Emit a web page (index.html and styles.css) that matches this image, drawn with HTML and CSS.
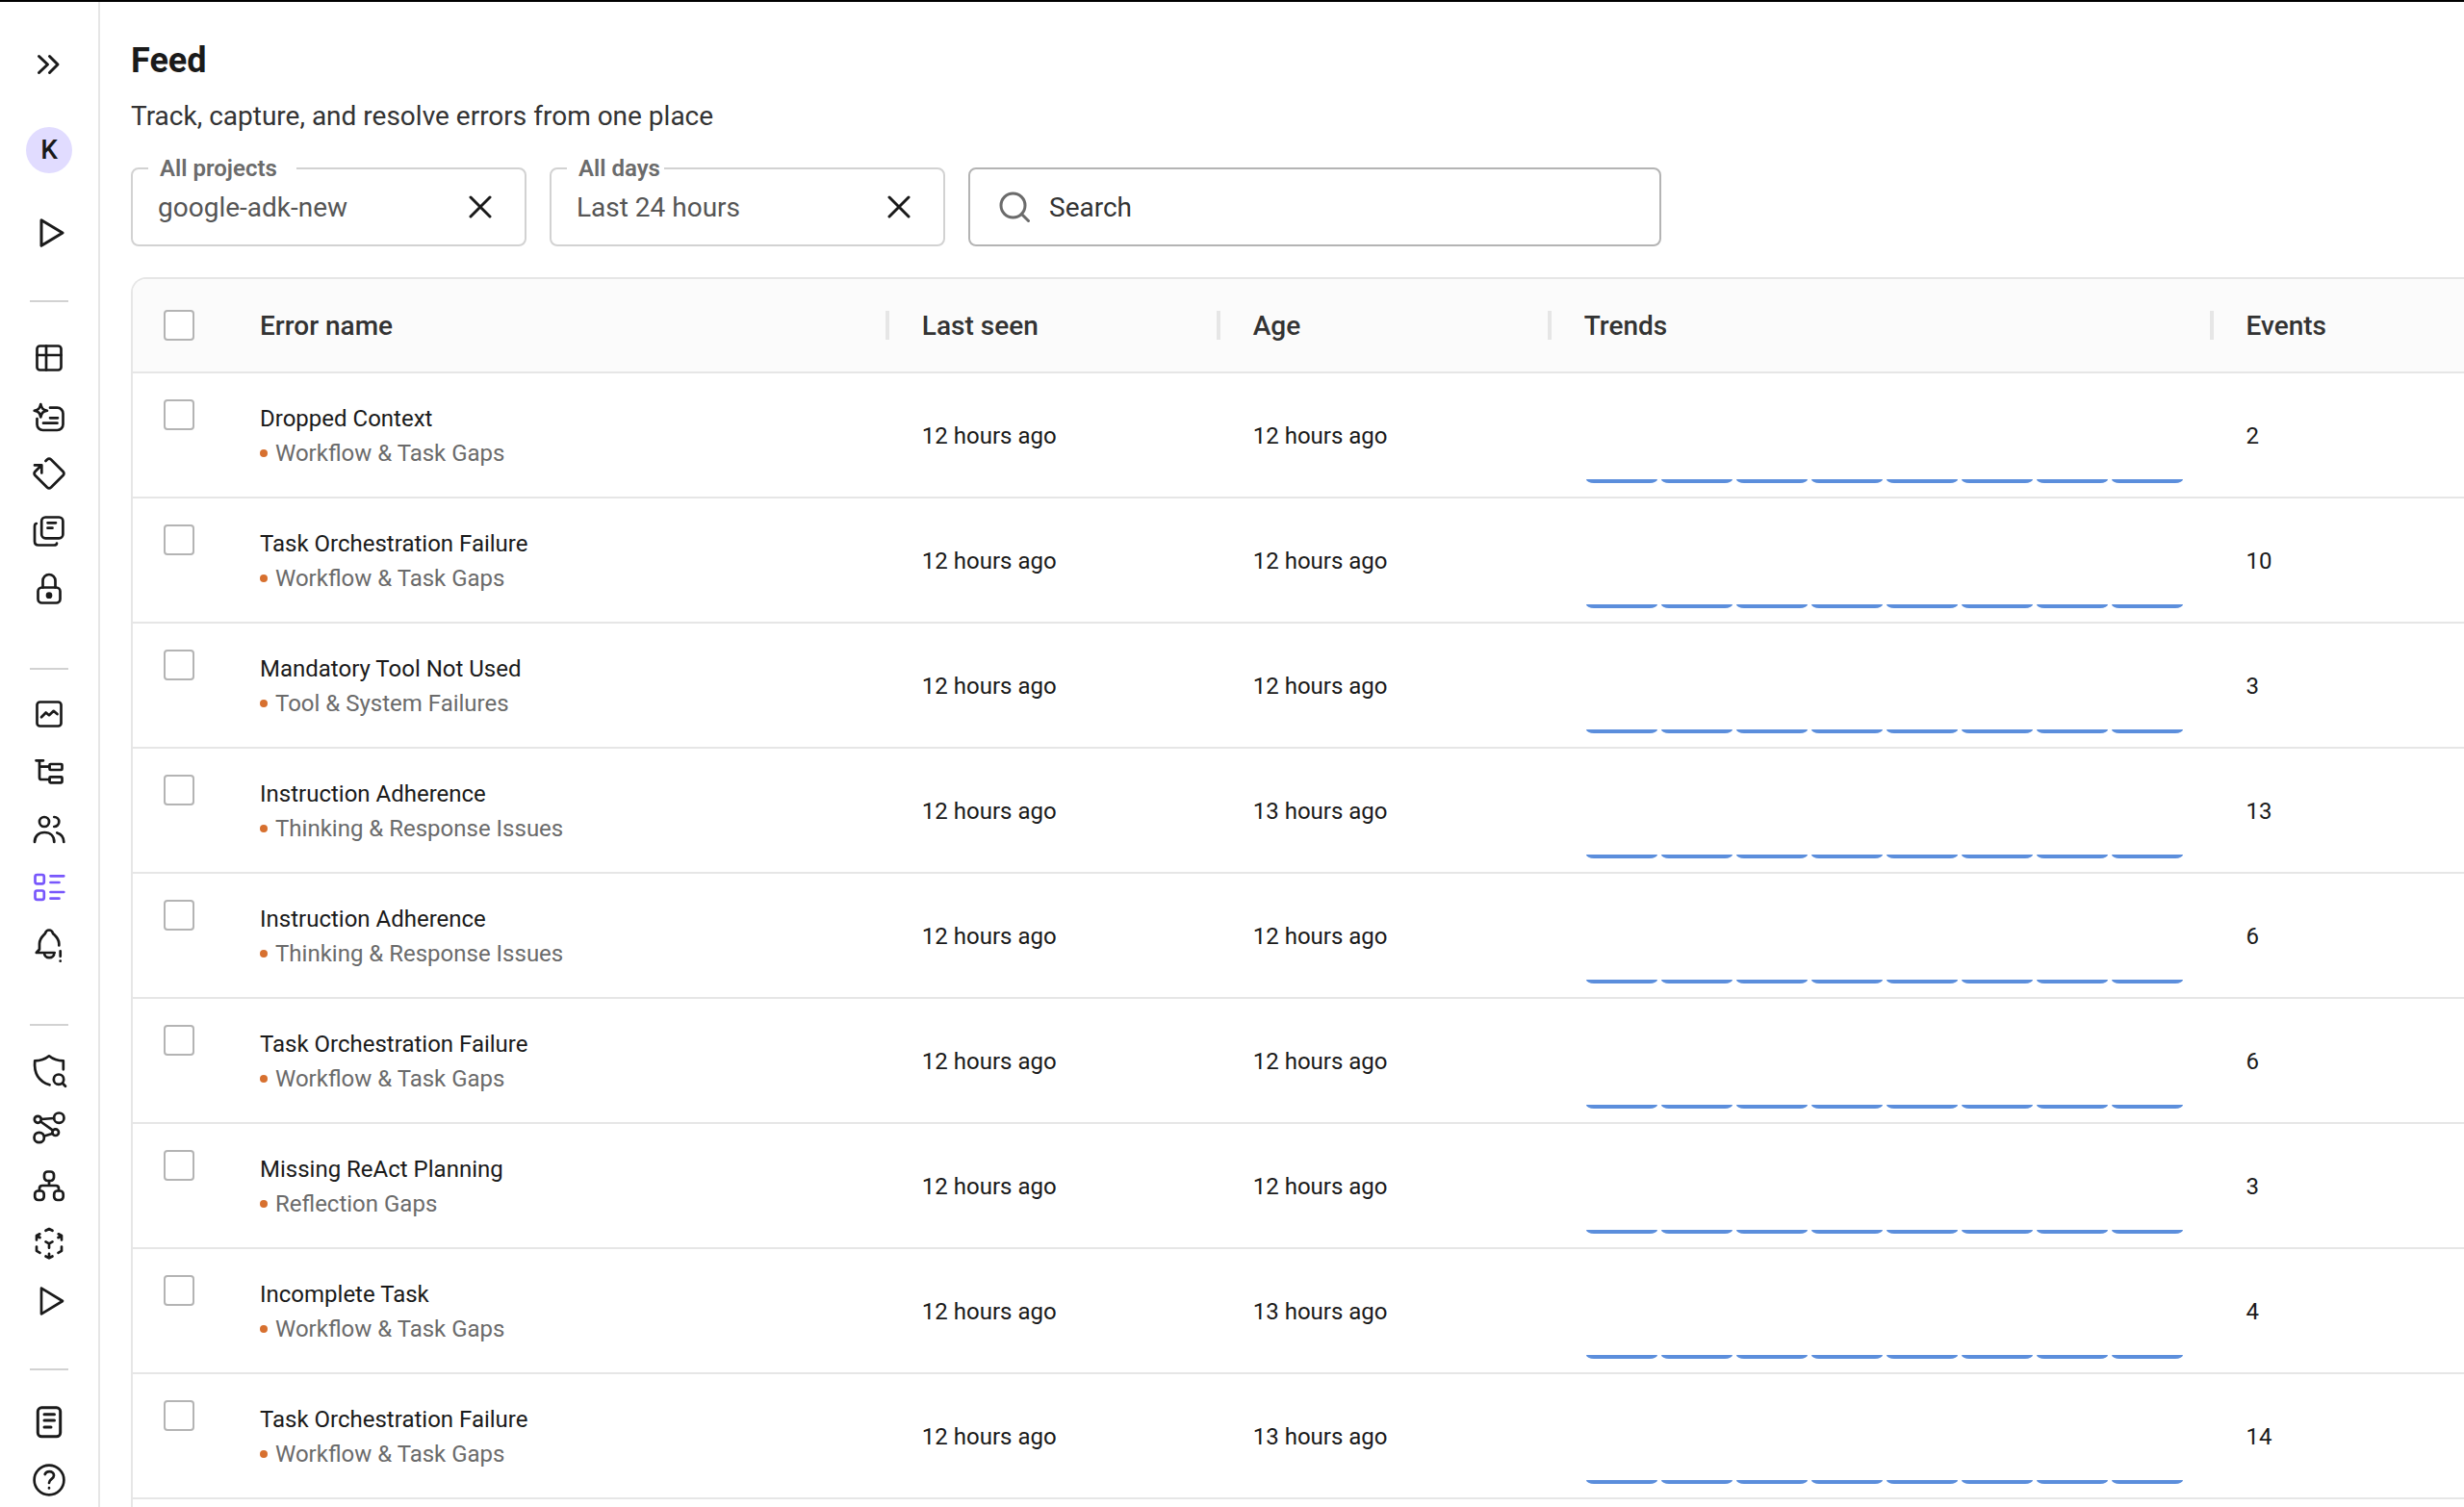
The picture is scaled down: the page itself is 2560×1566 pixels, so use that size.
FILE: index.html
```
<!DOCTYPE html>
<html lang="en">
<head>
  <meta charset="UTF-8">
  <title>Feed</title>
  <link rel="stylesheet" href="styles.css">
</head>
<body>
  <aside class="sidebar">
    <button class="nav-item" aria-label="Expand menu">
      <svg class="icon bold" viewBox="0 0 48 48"><path d="M13.5 15.5l9 8.5-9 8.5M24.5 15.5l8.500 8.500-8.500 8.500"/></svg>
    </button>
    <button class="avatar">K</button>
    <nav class="nav">
      <a class="nav-item" href="#" aria-label="Get started">
        <svg class="icon bold" viewBox="0 0 48 48"><path d="M16 10.700L38 24 16 37.300z"/></svg>
      </a>
      <hr>
      <a class="nav-item" href="#" aria-label="Datasets">
        <svg class="icon" viewBox="0 0 48 48"><rect x="11.500" y="11.500" width="25" height="25" rx="3"/><path d="M21 11.500v25M11.500 21h25"/></svg>
      </a>
      <a class="nav-item" href="#" aria-label="Prompts">
        <svg class="icon" viewBox="0 0 48 48"><path d="M25 15.700h7.500a6 6 0 0 1 6 6V33a6 6 0 0 1-6 6h-15a6 6 0 0 1-6-6v-6M25 26.300h8M18 31.700h14.500M15.300 12c1 4.500 2 5.700 6.700 6.700-4.700 1-5.700 2.200-6.700 6.700-1-4.500-2-5.700-6.600-6.700 4.600-1 5.600-2.200 6.600-6.700z"/></svg>
      </a>
      <a class="nav-item" href="#" aria-label="Annotations">
        <svg class="icon" viewBox="0 0 48 48"><path d="M20.500 11l1.500-1.500a3 3 0 0 1 4 0L38.500 22a3 3 0 0 1 0 4L26 38.500a3 3 0 0 1-4 0L9.500 26a3 3 0 0 1 0-4l6.500-6.500M9 15.400h7.300v8.100"/></svg>
      </a>
      <a class="nav-item" href="#" aria-label="Library">
        <svg class="icon" viewBox="0 0 48 48"><rect x="16.200" y="9.500" width="22.200" height="21.800" rx="4"/><path d="M22.500 15.300h8.500M22.500 20.700h5M10.800 16c-1.500.3-1.800 1.500-1.800 3v15.500q0 4 4 4H29q3 0 3-2"/></svg>
      </a>
      <a class="nav-item" href="#" aria-label="Keys">
        <svg class="icon" viewBox="0 0 48 48"><rect x="12.500" y="22.500" width="23" height="16" rx="4"/><path d="M17.500 22.500V15.500a6.500 6.500 0 0 1 13 0v7"/><circle class="fill" cx="24" cy="30.700" r="2"/></svg>
      </a>
      <hr class="roomy">
      <a class="nav-item" href="#" aria-label="Dashboard">
        <svg class="icon" viewBox="0 0 48 48"><rect x="11.500" y="11.500" width="25" height="25" rx="3"/><path d="M16 27.300l4.700-4.800 3.300 2.700 4.700-4.400 3.800 3.300"/></svg>
      </a>
      <a class="nav-item" href="#" aria-label="Traces">
        <svg class="icon" viewBox="0 0 48 48"><path d="M10.500 12.300h7.500M14 12.300V30q0 2 2 2h8.500M14 18.700h10.500"/><rect x="24.500" y="16" width="13" height="6" rx="1"/><rect x="24.500" y="29.300" width="13" height="6" rx="1"/></svg>
      </a>
      <a class="nav-item" href="#" aria-label="Users">
        <svg class="icon" viewBox="0 0 48 48"><circle cx="19" cy="16" r="5"/><path d="M29.300 11a5 5 0 0 1 0 10M9 37c0-6 4-10 10.200-10s10.100 4 10.100 10M32.300 27.500c4.200 1.300 6.900 4.700 7 9.500"/></svg>
      </a>
      <a class="nav-item active" href="#" aria-label="Feed">
        <svg class="icon" viewBox="0 0 48 48"><rect x="9.500" y="11" width="9.300" height="9.300" rx="2"/><rect x="9.500" y="27.500" width="9.300" height="9.300" rx="2"/><path d="M25.500 12.300h13.800M25.500 19h9M25.500 29h13.800M25.500 35.700h9"/></svg>
      </a>
      <a class="nav-item" href="#" aria-label="Alerts">
        <svg class="icon" viewBox="0 0 48 48"><path d="M34.300 24.500v-2c0-5-3.300-7.500-6.300-10.500-.5-2-2-3.500-4-3.500s-3.500 1.500-4 3.500c-3 3-6 5.500-6 10.500v6L10.800 32h18.900M19 32a5.200 5.200 0 0 0 10.400 0M35.700 30.300v5.500M35.700 40.500v.2"/></svg>
      </a>
      <hr class="roomy">
      <a class="nav-item" href="#" aria-label="Guardrails">
        <svg class="icon" viewBox="0 0 48 48"><path d="M24.500 39.300C14 36 8 28 9.200 14.300c6 0 10-1 14.800-5 4.800 4 8.800 5 14.800 5v9"/><circle cx="34" cy="33.700" r="5.200"/><path d="M37.800 37.500l3.200 3.200"/></svg>
      </a>
      <a class="nav-item" href="#" aria-label="Workflows">
        <svg class="icon" viewBox="0 0 48 48"><circle cx="12.300" cy="15.300" r="3.500"/><circle cx="34.300" cy="13.700" r="5.200"/><circle cx="30.700" cy="28.700" r="3.300"/><circle cx="13.700" cy="34" r="5.200"/><path d="M16 15l13-1M15.200 17.500l12.800 9.200M19 32.500l8.300-2.500"/></svg>
      </a>
      <a class="nav-item" href="#" aria-label="Agents">
        <svg class="icon" viewBox="0 0 48 48"><rect x="19" y="9.500" width="10" height="9.500" rx="3.500"/><rect x="9.200" y="29.500" width="9.500" height="9.500" rx="3.500"/><rect x="29.200" y="29.500" width="9.500" height="9.500" rx="3.500"/><path d="M24 19v5M14 29v-2q0-3 3-3h14q3 0 3 3v2"/></svg>
      </a>
      <a class="nav-item" href="#" aria-label="Models">
        <svg class="icon" viewBox="0 0 48 48"><path d="M20.500 10.800L24 9l3.500 1.800M11 20.500V16l3.500 2M11 16l3.300-1.700M37 20.500V16l-3.500 2M37 16l-3.300-1.700M20.500 22.300l3.500 2 3.500-2M24 24.300v4.400M11 27.500v4.300l3.500 2M37 27.500v4.300l-3.500 2M24 34.800V39M20.500 37.500L24 39.300l3.500-1.800"/></svg>
      </a>
      <a class="nav-item" href="#" aria-label="Playground">
        <svg class="icon" viewBox="0 0 48 48"><path d="M16 10.700L38 24 16 37.300z"/></svg>
      </a>
      <hr class="last">
      <a class="nav-item" href="#" aria-label="Docs">
        <svg class="icon bold" viewBox="0 0 48 48"><rect x="12.300" y="8.800" width="23.400" height="30" rx="4"/><path d="M19 15.700h10.500M19 22h10.500M19 29h7"/></svg>
      </a>
      <a class="nav-item" href="#" aria-label="Help">
        <svg class="icon" viewBox="0 0 48 48"><circle cx="24" cy="24" r="15.400"/><path d="M19.700 18c.6-1.800 2.400-2.900 4.600-2.900 2.700 0 4.700 1.700 4.700 4.200 0 3.500-5 3.700-5 7.700M24 32.200v.3"/></svg>
      </a>
    </nav>
  </aside>

  <main class="main">
    <h1>Feed</h1>
    <p class="subtitle">Track, capture, and resolve errors from one place</p>

    <div class="filters">
      <div class="field">
        <label class="wide" for="project">All projects</label>
        <select id="project"><option>google-adk-new</option></select>
        <button class="clear" aria-label="Clear project">
          <svg viewBox="0 0 24 24"><path d="M2 2l20 20M22 2L2 22"/></svg>
        </button>
      </div>
      <div class="field">
        <label for="days">All days</label>
        <select id="days"><option>Last 24 hours</option></select>
        <button class="clear" aria-label="Clear days">
          <svg viewBox="0 0 24 24"><path d="M2 2l20 20M22 2L2 22"/></svg>
        </button>
      </div>
      <div class="field search">
        <svg viewBox="0 0 32 32"><circle cx="14.500" cy="14.500" r="12.500"/><path d="M23.500 23.500l7 7"/></svg>
        <input type="text" placeholder="Search" aria-label="Search">
      </div>
    </div>

    <div class="table-wrap">
      <table>
        <colgroup>
          <col class="col-check">
          <col class="col-wide">
          <col class="col-time">
          <col class="col-time">
          <col class="col-wide">
          <col>
        </colgroup>
        <thead>
          <tr>
            <th class="check"><input type="checkbox" aria-label="Select all"></th>
            <th>Error name</th>
            <th class="sep">Last seen</th>
            <th class="sep">Age</th>
            <th class="sep">Trends</th>
            <th class="sep">Events</th>
          </tr>
        </thead>
        <tbody id="rows"></tbody>
      </table>
    </div>
  </main>

  <script>
    const errors = [
      ["Dropped Context", "Workflow & Task Gaps", "12 hours ago", "12 hours ago", 2],
      ["Task Orchestration Failure", "Workflow & Task Gaps", "12 hours ago", "12 hours ago", 10],
      ["Mandatory Tool Not Used", "Tool & System Failures", "12 hours ago", "12 hours ago", 3],
      ["Instruction Adherence", "Thinking & Response Issues", "12 hours ago", "13 hours ago", 13],
      ["Instruction Adherence", "Thinking & Response Issues", "12 hours ago", "12 hours ago", 6],
      ["Task Orchestration Failure", "Workflow & Task Gaps", "12 hours ago", "12 hours ago", 6],
      ["Missing ReAct Planning", "Reflection Gaps", "12 hours ago", "12 hours ago", 3],
      ["Incomplete Task", "Workflow & Task Gaps", "12 hours ago", "13 hours ago", 4],
      ["Task Orchestration Failure", "Workflow & Task Gaps", "12 hours ago", "13 hours ago", 14]
    ];

    const bars = "<span></span>".repeat(8);

    document.getElementById("rows").innerHTML = errors.map(([name, group, seen, age, events]) => `
      <tr>
        <td class="check"><input type="checkbox" aria-label="Select ${name}"></td>
        <td>
          <div>${name}</div>
          <div class="group">${group.replace("&", "&amp;")}</div>
        </td>
        <td>${seen}</td>
        <td>${age}</td>
        <td class="trend"><div class="bars">${bars}</div></td>
        <td>${events}</td>
      </tr>
    `).join("");
  </script>
</body>
</html>
```
FILE: styles.css
```
* {
  box-sizing: border-box;
}

body {
  margin: 0;
  display: flex;
  height: 100vh;
  overflow: hidden;
  border-top: 2px solid #000;
  background: #fff;
  color: #1a1a1a;
  font-family: Roboto, "Noto Sans", sans-serif;
  font-size: 24px;
  line-height: 36px;
}

button,
input,
select {
  font: inherit;
  color: inherit;
}

button {
  padding: 0;
  border: none;
  background: none;
  cursor: pointer;
}

svg {
  display: block;
  fill: none;
  stroke: currentColor;
  stroke-linecap: round;
  stroke-linejoin: round;
}

/* Sidebar */

.sidebar {
  flex: none;
  display: flex;
  flex-direction: column;
  align-items: center;
  width: 104px;
  padding-top: 35px;
  border-right: 2px solid #e6e6e6;
}

.nav {
  margin-top: 32px;
}

.nav-item {
  flex: none;
  display: flex;
  align-items: center;
  justify-content: center;
  width: 60px;
  height: 60px;
  color: #1a1a1a;
}

.nav-item.active {
  color: #7857fc;
}

.icon {
  width: 48px;
  height: 48px;
  stroke-width: 2.7;
}

.icon.bold {
  stroke-width: 3;
}

.icon .fill {
  fill: currentColor;
}

.avatar {
  flex: none;
  width: 48px;
  height: 48px;
  margin-top: 35px;
  border-radius: 50%;
  background: #e1dcff;
  font-size: 28px;
  font-weight: 500;
}

.nav hr {
  width: 40px;
  height: 2px;
  margin: 40px auto 28px;
  border: none;
  background: #d2d2d2;
}

.nav hr.roomy {
  margin: 52px auto 16px;
}

.nav hr.last {
  margin-bottom: 24px;
}

/* Page */

.main {
  flex: 1;
  min-width: 0;
  display: flex;
  flex-direction: column;
  padding: 37px 0 0 32px;
}

h1 {
  margin: 0;
  font-size: 36px;
  font-weight: 700;
  line-height: 48px;
}

.subtitle {
  margin: 16px 0 35px;
  color: #333;
  font-size: 28px;
}

.filters {
  display: flex;
  gap: 24px;
  margin-bottom: 32px;
}

.field {
  position: relative;
  display: flex;
  align-items: center;
  width: 411px;
  height: 82px;
  padding: 0 34px 0 26px;
  border: 2px solid #d2d2d2;
  border-radius: 8px;
  color: #555;
  font-size: 28px;
}

.field label {
  position: absolute;
  top: -19px;
  left: 16px;
  padding: 0 4px 0 12px;
  background: #fff;
  color: #6b6b6b;
  font-size: 24px;
  font-weight: 600;
}

.field label.wide {
  padding-right: 20px;
}

.field select {
  flex: 1;
  min-width: 0;
  padding: 2px 0 0;
  border: none;
  background: none;
  appearance: none;
}

.clear svg {
  width: 24px;
  height: 24px;
  color: #1a1a1a;
  stroke-width: 3;
}

.field.search {
  width: 720px;
  gap: 20px;
  padding-left: 30px;
  border-color: #b4b4b4;
}

.search svg {
  width: 32px;
  height: 32px;
  color: #6b6b6b;
  stroke-width: 3;
}

.search input {
  flex: 1;
  min-width: 0;
  padding: 2px 0 0;
  border: none;
  outline: none;
  background: none;
}

.search input::placeholder {
  color: #333;
  opacity: 1;
}

/* Error table */

.table-wrap {
  flex: 1;
  min-height: 0;
  overflow: hidden;
  border: solid #e6e6e6;
  border-width: 2px 0 0 2px;
  border-top-left-radius: 16px;
}

table {
  width: 100%;
  table-layout: fixed;
  border-collapse: separate;
  border-spacing: 0;
}

.col-check {
  width: 96px;
}

.col-wide {
  width: 28.4%;
}

.col-time {
  width: 14.2%;
}

th,
td {
  padding: 2px 0 0 36px;
  border-bottom: 2px solid #e6e6e6;
  text-align: left;
  vertical-align: middle;
}

th {
  position: relative;
  height: 98px;
  background: #fbfbfb;
  color: #333;
  font-size: 28px;
  font-weight: 500;
}

th.sep::before {
  content: "";
  position: absolute;
  top: 33px;
  left: -2px;
  width: 4px;
  height: 30px;
  background: #e6e6e6;
}

td {
  height: 130px;
}

th.check {
  padding: 0 0 0 32px;
}

td.check {
  padding: 27px 0 0 32px;
  vertical-align: top;
}

.check input {
  display: block;
  width: 32px;
  height: 32px;
  margin: 0;
  border: 2px solid #b4b4b4;
  border-radius: 4px;
  background: #fff;
  appearance: none;
}

.check input:checked {
  background: #7857fc;
}

.group {
  display: flex;
  align-items: center;
  gap: 8px;
  color: #6b6b6b;
}

.group::before {
  content: "";
  width: 8px;
  height: 8px;
  border-radius: 50%;
  background: #d7702f;
}

td.trend {
  padding: 0 30px 14px 38px;
  vertical-align: bottom;
}

.bars {
  display: flex;
  gap: 4px;
}

.bars span {
  flex: 1;
  height: 4px;
  border-radius: 0 0 8px 8px / 0 0 4px 4px;
  background: #5b8edc;
}
```
